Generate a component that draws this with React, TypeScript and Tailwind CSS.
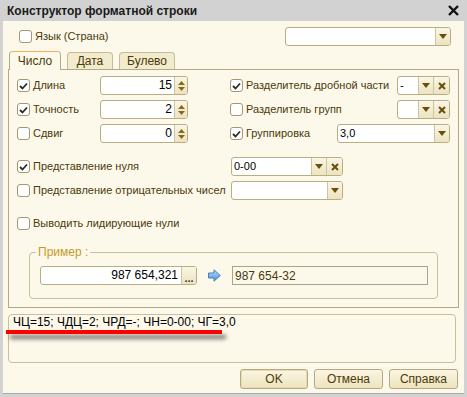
import React from "react";

const font = { fontFamily: '"Liberation Sans", Arial, sans-serif' };

function Check({ on }: { on?: boolean }) {
  return (
    <span className="grid h-[13px] w-[13px] shrink-0 place-items-center rounded-[3px] border border-[#a39872] bg-white">
      {on && (
        <svg width="9" height="8" viewBox="0 0 9 8">
          <path d="M1 4 L3.5 6.5 L8 1.5" fill="none" stroke="#2b2b2b" strokeWidth="1.8" />
        </svg>
      )}
    </span>
  );
}

function CheckLabel({ on, label, w }: { on?: boolean; label: string; w: string }) {
  return (
    <div className={`flex items-center gap-[3px] ${w}`}>
      <Check on={on} />
      <span className="whitespace-nowrap text-[#4b3a0b]">{label}</span>
    </div>
  );
}

function Arrow() {
  return (
    <div className="grid w-[15px] shrink-0 place-items-center border-l border-[#cfc4a0] bg-gradient-to-b from-[#faf6e6] to-[#ece3c0]">
      <svg width="8" height="5" viewBox="0 0 8 5">
        <path d="M0 0 H8 L4 5 Z" fill="#6a4e0c" />
      </svg>
    </div>
  );
}

function Clear() {
  return (
    <div className="grid w-[16px] shrink-0 place-items-center border-l border-[#cfc4a0] bg-gradient-to-b from-[#faf6e6] to-[#ece3c0]">
      <svg width="8" height="8" viewBox="0 0 8 8">
        <path d="M1 1 L7 7 M7 1 L1 7" stroke="#6a4e0c" strokeWidth="2" />
      </svg>
    </div>
  );
}

function Spin() {
  return (
    <div className="flex w-[13px] shrink-0 flex-col items-center justify-center gap-[2px] border-l border-[#cfc4a0] bg-gradient-to-b from-[#faf6e6] to-[#ece3c0]">
      <svg width="7" height="4" viewBox="0 0 7 4">
        <path d="M0 4 H7 L3.5 0 Z" fill="#8a6a1a" />
      </svg>
      <svg width="7" height="4" viewBox="0 0 7 4">
        <path d="M0 0 H7 L3.5 4 Z" fill="#8a6a1a" />
      </svg>
    </div>
  );
}

function Box({ w, children }: { w: string; children?: React.ReactNode }) {
  return (
    <div className={`flex h-[19px] overflow-hidden rounded-[3px] border border-[#b9ad82] bg-white ${w}`}>
      {children}
    </div>
  );
}

function Num({ v }: { v: string }) {
  return (
    <Box w="w-[88px]">
      <span className="flex-1 pr-[2px] text-right text-[12px] leading-[17px] text-black">{v}</span>
      <Spin />
    </Box>
  );
}

function Txt({ v }: { v?: string }) {
  return <span className="flex-1 pl-[2px] leading-[17px] text-black">{v}</span>;
}

export default function App() {
  return (
    <div style={font} className="flex h-[397px] w-[467px] flex-col bg-[#d2d2d2] text-[11px]">
      <div className="flex h-[21px] w-[467px] items-center pl-[7px]">
        <span className="flex-1 text-[12px] font-bold text-[#1a1a1a]">Конструктор форматной строки</span>
        <svg className="mr-[8px] shrink-0" width="11" height="11" viewBox="0 0 11 11">
          <path d="M1 1 L10 10 M10 1 L1 10" stroke="#111" strokeWidth="2.4" />
        </svg>
      </div>
      <div className="mx-[3px] mb-[3px] flex flex-1 flex-col border-b border-[#a9a9a9] bg-[#fcf9ea] px-[5px]">
        <div className="mt-[6px] flex h-[19px] items-center justify-between pl-[11px] pr-[8px]">
          <CheckLabel label="Язык (Страна)" w="" />
          <Box w="w-[166px]">
            <Txt />
            <Arrow />
          </Box>
        </div>

        <div className="mt-[5px] flex items-end gap-[6px] pl-[1px]">
          <div className="relative z-10 -mb-px flex h-[19px] w-[52px] items-center justify-center rounded-t-[4px] border border-b-0 border-[#b3aa84] border-t-[#f0b060] bg-[#fcf9ea] text-[12px] text-[#4b3a0b]">
            Число
          </div>
          <div className="flex h-[17px] w-[46px] items-center justify-center rounded-t-[4px] border border-b-0 border-[#c6bd98] bg-[#f2ebcd] text-[12px] text-[#4b3a0b]">
            Дата
          </div>
          <div className="flex h-[17px] w-[56px] items-center justify-center rounded-t-[4px] border border-b-0 border-[#c6bd98] bg-[#f2ebcd] text-[12px] text-[#4b3a0b]">
            Булево
          </div>
        </div>

        <div className="flex h-[239px] w-[451px] flex-col border border-[#b3aa84] pl-[8px] pt-[6px]">
          <div className="flex">
            <div className="flex flex-col gap-[5px]">
              <div className="flex items-center">
                <CheckLabel on label="Длина" w="w-[83px]" />
                <Num v="15" />
              </div>
              <div className="flex items-center">
                <CheckLabel on label="Точность" w="w-[83px]" />
                <Num v="2" />
              </div>
              <div className="flex items-center">
                <CheckLabel label="Сдвиг" w="w-[83px]" />
                <Num v="0" />
              </div>
            </div>
            <div className="ml-[42px] flex flex-col gap-[5px]">
              <div className="flex items-center">
                <CheckLabel on label="Разделитель дробной части" w="w-[167px]" />
                <Box w="w-[53px]">
                  <Txt v="-" />
                  <Arrow />
                  <Clear />
                </Box>
              </div>
              <div className="flex items-center">
                <CheckLabel label="Разделитель групп" w="w-[167px]" />
                <Box w="w-[53px]">
                  <Txt />
                  <Arrow />
                  <Clear />
                </Box>
              </div>
              <div className="flex items-center">
                <CheckLabel on label="Группировка" w="w-[107px]" />
                <Box w="w-[113px]">
                  <Txt v="3,0" />
                  <Arrow />
                </Box>
              </div>
            </div>
          </div>

          <div className="mt-[14px] flex items-center">
            <CheckLabel on label="Представление нуля" w="w-[214px]" />
            <Box w="w-[112px]">
              <Txt v="0-00" />
              <Arrow />
              <Clear />
            </Box>
          </div>
          <div className="mt-[5px] flex items-center">
            <CheckLabel label="Представление отрицательных чисел" w="w-[214px]" />
            <Box w="w-[112px]">
              <Txt />
              <Arrow />
            </Box>
          </div>
          <div className="mt-[14px] flex h-[19px] items-center">
            <CheckLabel label="Выводить лидирующие нули" w="" />
          </div>

          <div className="relative ml-[12px] mt-[19px] h-[47px] w-[409px] rounded-[4px] border border-[#c8bf9c]">
            <span className="absolute -top-[8px] left-[6px] bg-[#fcf9ea] px-[2px] text-[12px] leading-[14px] text-[#c59a2c]">
              Пример :
            </span>
            <div className="ml-[10px] mt-[13px] flex items-center">
              <Box w="w-[157px]">
                <span className="flex-1 pr-[3px] text-right text-[12px] leading-[17px] text-black">987 654,321</span>
                <div className="grid w-[15px] place-items-end justify-center border-l border-[#cfc4a0] bg-gradient-to-b from-[#faf6e6] to-[#ece3c0] pb-[3px] leading-none text-[#333]">
                  <span className="text-[11px] font-bold leading-[6px]">...</span>
                </div>
              </Box>
              <div className="flex w-[35px] justify-center">
                <svg width="13" height="13" viewBox="0 0 13 13">
                  <defs>
                    <linearGradient id="ar" x1="0" y1="0" x2="0" y2="1">
                      <stop offset="0" stopColor="#bfe0fb" />
                      <stop offset="1" stopColor="#3f8fd8" />
                    </linearGradient>
                  </defs>
                  <path d="M0.5 4 H6 V0.8 L12.3 6.5 L6 12.2 V9 H0.5 Z" fill="url(#ar)" stroke="#4a7fb8" strokeWidth="1" />
                </svg>
              </div>
              <div className="flex h-[19px] w-[196px] items-center border border-[#aaa48c] pl-[2px] text-[12px] text-[#4b3a0b]">
                987 654-32
              </div>
            </div>
          </div>
        </div>

        <div className="relative mt-[6px] h-[49px] w-[448px] rounded-[4px] border border-[#c8bf9c] pl-[4px] pt-0 text-[12px] leading-[15px] text-black">
          ЧЦ=15; ЧДЦ=2; ЧРД=-; ЧН=0-00; ЧГ=3,0
          <div className="absolute left-[-3px] top-[15px] h-[4px] w-[216px] bg-[#ff0000] shadow-[4px_5px_4px_rgba(0,0,0,0.55)]" />
        </div>

        <div className="mt-[6px] flex justify-end gap-[6px] pr-[1px]">
          <button className="h-[20px] w-[68px] rounded-[3px] border border-[#b3a987] bg-gradient-to-b from-[#fbf6e3] to-[#eee3bd] text-[12px] text-[#4b3a0b] shadow-[inset_0_0_0_1px_#e9dca8]">
            OK
          </button>
          <button className="h-[20px] w-[69px] rounded-[3px] border border-[#b3a987] bg-gradient-to-b from-[#fbf6e3] to-[#eee3bd] text-[12px] text-[#4b3a0b]">
            Отмена
          </button>
          <button className="h-[20px] w-[69px] rounded-[3px] border border-[#b3a987] bg-gradient-to-b from-[#fbf6e3] to-[#eee3bd] text-[12px] text-[#4b3a0b]">
            Справка
          </button>
        </div>
      </div>
    </div>
  );
}
